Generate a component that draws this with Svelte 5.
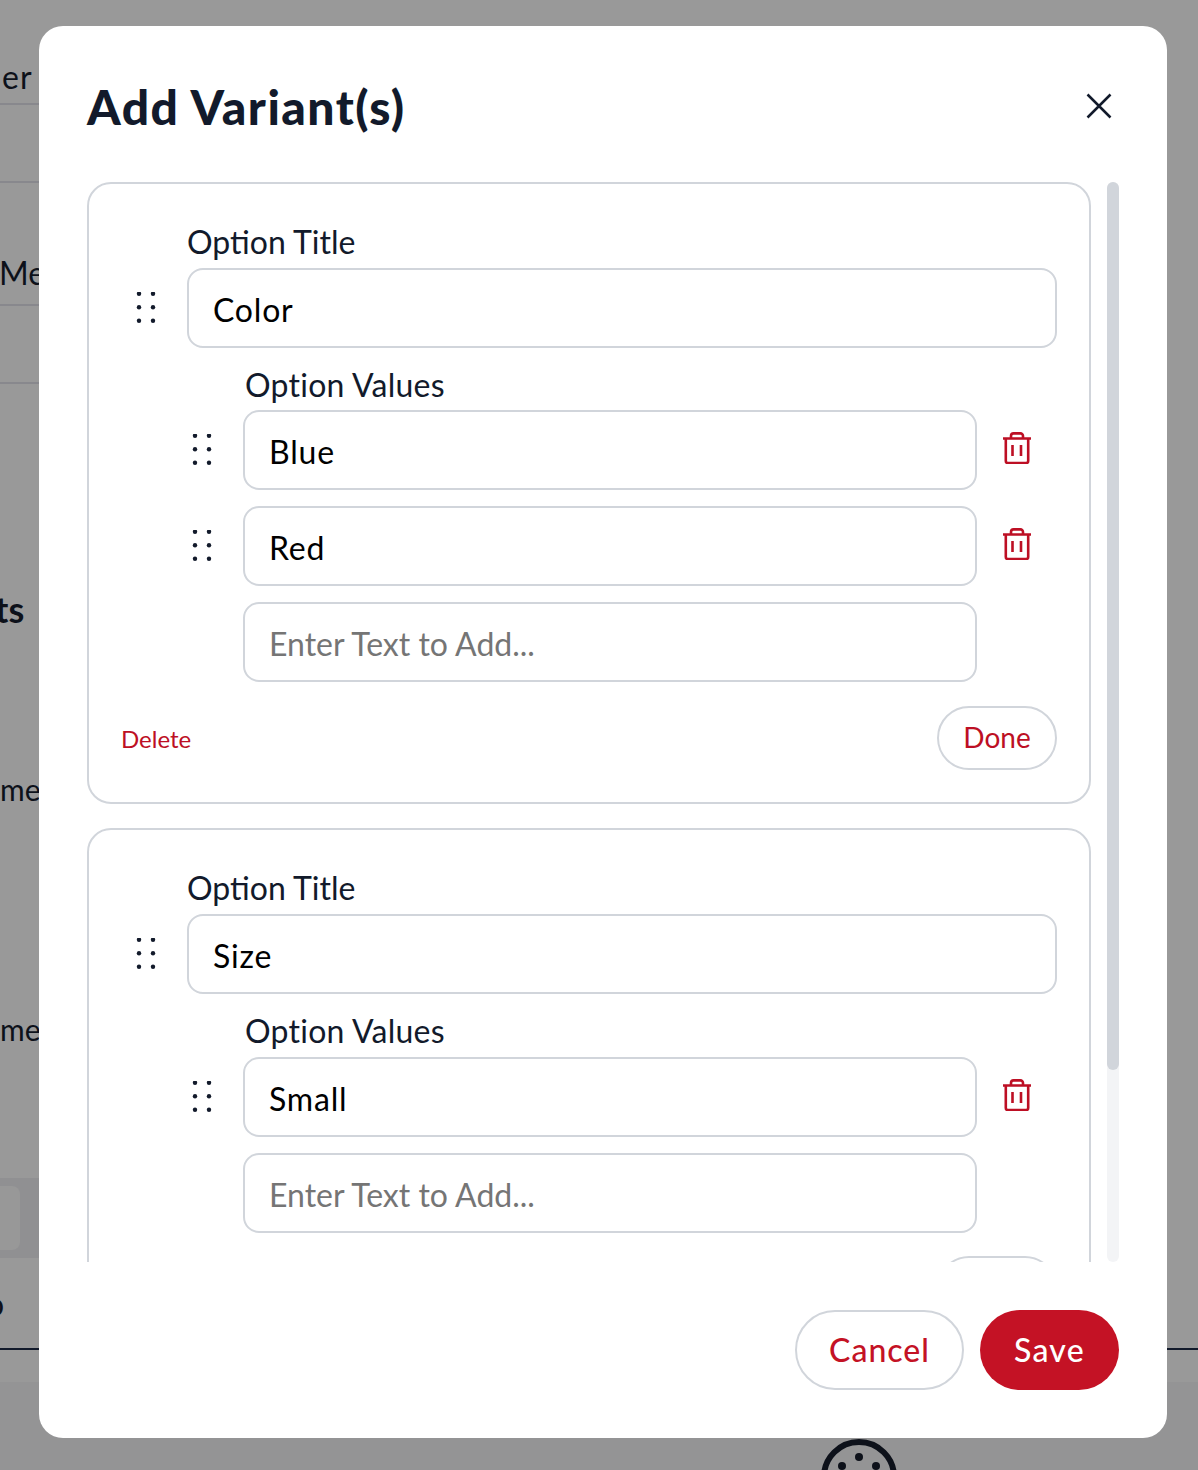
<script>
  const options = [
    { title: 'Color', values: ['Blue', 'Red'] },
    { title: 'Size', values: ['Small'] }
  ];
  const dots = [0, 13.5, 27];
</script>

{#snippet handle()}
  <svg class="handle" width="20" height="32" viewBox="0 0 20 32" aria-hidden="true">
    {#each dots as y}
      <circle cx="3" cy={y + 1.7} r="2.2" />
      <circle cx="17" cy={y + 1.7} r="2.2" />
    {/each}
  </svg>
{/snippet}

{#snippet trash()}
  <svg class="trash" width="30" height="32" viewBox="0 0 30 32" aria-hidden="true">
    <path d="M1 6.5H29M3.8 6.5V29a2 2 0 0 0 2 2H24.2a2 2 0 0 0 2-2V6.5M9 6.5V4a2.6 2.6 0 0 1 2.6-2.6H18.4A2.6 2.6 0 0 1 21 4V6.5M10.5 13V24M19 13V24" />
  </svg>
{/snippet}

<div class="page">
  <div class="behind">
    <div class="row r1"><span>er</span></div>
    <div class="row r2"></div>
    <div class="row r3"><span class="me">Me</span></div>
    <div class="row r4"></div>
    <div class="heading">ts</div>
    <div class="field-label first">me</div>
    <div class="field-label second">me</div>
    <div class="band"><div class="block"></div></div>
    <div class="tail"><span>o</span></div>
    <div class="bottom"></div>
  </div>

  <svg class="palette" width="92" height="40" viewBox="0 0 92 40" aria-hidden="true">
    <circle cx="46" cy="41" r="35" />
    <circle class="dot" cx="46" cy="21" r="4" />
    <circle class="dot" cx="29" cy="30" r="4" />
    <circle class="dot" cx="63" cy="30" r="4" />
  </svg>

  <div class="modal">
    <header>
      <h2>Add Variant(s)</h2>
      <button class="close" aria-label="Close">
        <svg width="28" height="28" viewBox="0 0 28 28">
          <path d="M2.5 2.5L25.5 25.5M25.5 2.5L2.5 25.5" />
        </svg>
      </button>
    </header>

    <div class="body">
      <div class="list">
        {#each options as option}
          <section class="card">
            <label class="title-label" for={option.title}>Option Title</label>
            <div class="title-row">
              {@render handle()}
              <input id={option.title} value={option.title} />
            </div>
            <div class="values-label">Option Values</div>
            <div class="values">
              {#each option.values as value}
                <div class="value-row">
                  {@render handle()}
                  <input {value} />
                  {@render trash()}
                </div>
              {/each}
              <div class="value-row add">
                <input placeholder="Enter Text to Add..." />
              </div>
            </div>
            <div class="card-foot">
              <button class="link">Delete</button>
              <button class="done">Done</button>
            </div>
          </section>
        {/each}
      </div>
      <div class="track"><div class="thumb"></div></div>
    </div>

    <footer>
      <button class="pill cancel">Cancel</button>
      <button class="pill save">Save</button>
    </footer>
  </div>
</div>

<style>
  :global(body) {
    margin: 0;
    font-family: Lato, "Open Sans", sans-serif;
  }

  .page {
    position: relative;
    height: 1470px;
    overflow: hidden;
    background: #999999;
    color: #0d111a;
    font-size: 32px;
  }

  .row {
    box-sizing: border-box;
    width: 60px;
    border-bottom: 2px solid #88888d;
    display: flex;
    align-items: flex-end;
  }
  .r1 { height: 105px; padding-bottom: 7px; }
  .r2 { height: 78px; }
  .r3 { height: 123px; padding-bottom: 12px; }
  .r4 { height: 78px; }
  .r1 span { margin-left: 2px; letter-spacing: 1px; }
  .me { white-space: nowrap; margin-left: -1px; }

  .heading {
    margin-top: 201px;
    height: 48px;
    line-height: 48px;
    font-size: 36px;
    font-weight: 700;
    text-indent: -5px;
    overflow: hidden;
  }
  .field-label {
    line-height: 36px;
    font-size: 30px;
    white-space: nowrap;
  }
  .first { margin-top: 138px; }
  .second { margin-top: 204px; }

  .band {
    margin-top: 131px;
    width: 39px;
    height: 80px;
    background: #909092;
    display: flex;
    align-items: center;
  }
  .block {
    width: 20px;
    height: 64px;
    background: #989898;
    border-radius: 0 8px 8px 0;
  }
  .tail {
    box-sizing: border-box;
    height: 92px;
    border-bottom: 2px solid #121a2b;
    margin-bottom: 32px;
    padding-top: 28px;
    line-height: 36px;
    text-indent: -14px;
    overflow: hidden;
  }
  .bottom {
    height: 90px;
    background: #949495;
  }

  .palette {
    position: absolute;
    left: 813px;
    top: 1436px;
    fill: none;
    stroke: #0d111a;
    stroke-width: 6;
  }
  .palette .dot {
    fill: #0d111a;
    stroke: none;
  }

  .modal {
    position: absolute;
    left: 39px;
    top: 26px;
    width: 1128px;
    height: 1412px;
    box-sizing: border-box;
    padding: 0 48px;
    background: #fff;
    border-radius: 24px;
    display: flex;
    flex-direction: column;
  }

  header {
    height: 156px;
    flex: none;
    display: flex;
    align-items: flex-start;
    justify-content: space-between;
  }
  h2 {
    margin: 49px 0 0;
    font-size: 48px;
    line-height: 64px;
    font-weight: 900;
    letter-spacing: 1.45px;
    color: #121a2b;
  }
  .close {
    margin: 66px 6px 0 0;
    padding: 0;
    width: 28px;
    height: 28px;
    border: none;
    background: none;
  }
  .close svg {
    display: block;
    fill: none;
    stroke: #121a2b;
    stroke-width: 2.5;
  }

  .body {
    height: 1080px;
    flex: none;
    display: flex;
    gap: 16px;
    overflow: hidden;
  }
  .list {
    width: 1004px;
    flex: none;
    display: flex;
    flex-direction: column;
    gap: 24px;
  }
  .track {
    width: 12px;
    height: 1080px;
    background: #f3f4f6;
    border-radius: 6px;
  }
  .thumb {
    height: 888px;
    background: #d1d5db;
    border-radius: 6px;
  }

  .card {
    box-sizing: border-box;
    flex: none;
    padding: 38px 32px 32px 32px;
    border: 2px solid #d1d5db;
    border-radius: 24px;
  }

  .title-label,
  .values-label {
    display: block;
    height: 40px;
    line-height: 40px;
    font-size: 32px;
    color: #121a2b;
  }
  .title-label {
    margin: 0 0 6px 66px;
  }
  .values-label {
    margin: 17px 0 5px 124px;
    letter-spacing: 0.25px;
  }
  .card + .card .values-label {
    margin-bottom: 6px;
  }

  .title-row,
  .value-row {
    display: flex;
    align-items: center;
    gap: 31px;
  }
  .title-row {
    margin-left: 15px;
  }
  .value-row {
    margin-left: 71px;
  }
  .value-row.add {
    padding-left: 51px;
  }
  .values {
    display: flex;
    flex-direction: column;
    gap: 16px;
  }

  .handle {
    flex: none;
    fill: #121a2b;
  }
  .trash {
    flex: none;
    margin: 0 0 4px -6px;
    fill: none;
    stroke: #bd0f24;
    stroke-width: 2.6;
  }

  input {
    box-sizing: border-box;
    width: 734px;
    height: 80px;
    padding: 2px 24px 0;
    border: 2px solid #d1d5db;
    border-radius: 16px;
    outline: none;
    background: #fff;
    font: inherit;
    font-size: 32px;
    letter-spacing: 0.8px;
    color: #000;
  }
  .title-row input {
    width: 870px;
  }
  input::placeholder {
    color: #757575;
    opacity: 1;
    letter-spacing: 0;
  }

  .card-foot {
    margin-top: 24px;
    display: flex;
    align-items: center;
    justify-content: space-between;
  }
  .card + .card .card-foot {
    margin-top: 23px;
  }
  .link {
    padding: 0;
    border: none;
    background: none;
    font: inherit;
    font-size: 24px;
    color: #bd0f24;
  }
  .done {
    box-sizing: border-box;
    width: 120px;
    height: 64px;
    padding: 0 0 2px;
    border: 2px solid #d1d5db;
    border-radius: 32px;
    background: #fff;
    font: inherit;
    font-size: 28px;
    color: #bd0f24;
  }

  footer {
    flex: 1;
    display: flex;
    justify-content: flex-end;
    gap: 16px;
    padding-top: 48px;
  }
  .pill {
    box-sizing: border-box;
    height: 80px;
    padding: 0 0 2px;
    border-radius: 40px;
    font: inherit;
    font-size: 32px;
    font-weight: 500;
    letter-spacing: 1px;
  }
  .cancel {
    width: 169px;
    border: 2px solid #d1d5db;
    background: #fff;
    color: #c41225;
  }
  .save {
    width: 139px;
    border: none;
    background: #c41225;
    color: #fff;
    letter-spacing: 1.3px;
  }
</style>
